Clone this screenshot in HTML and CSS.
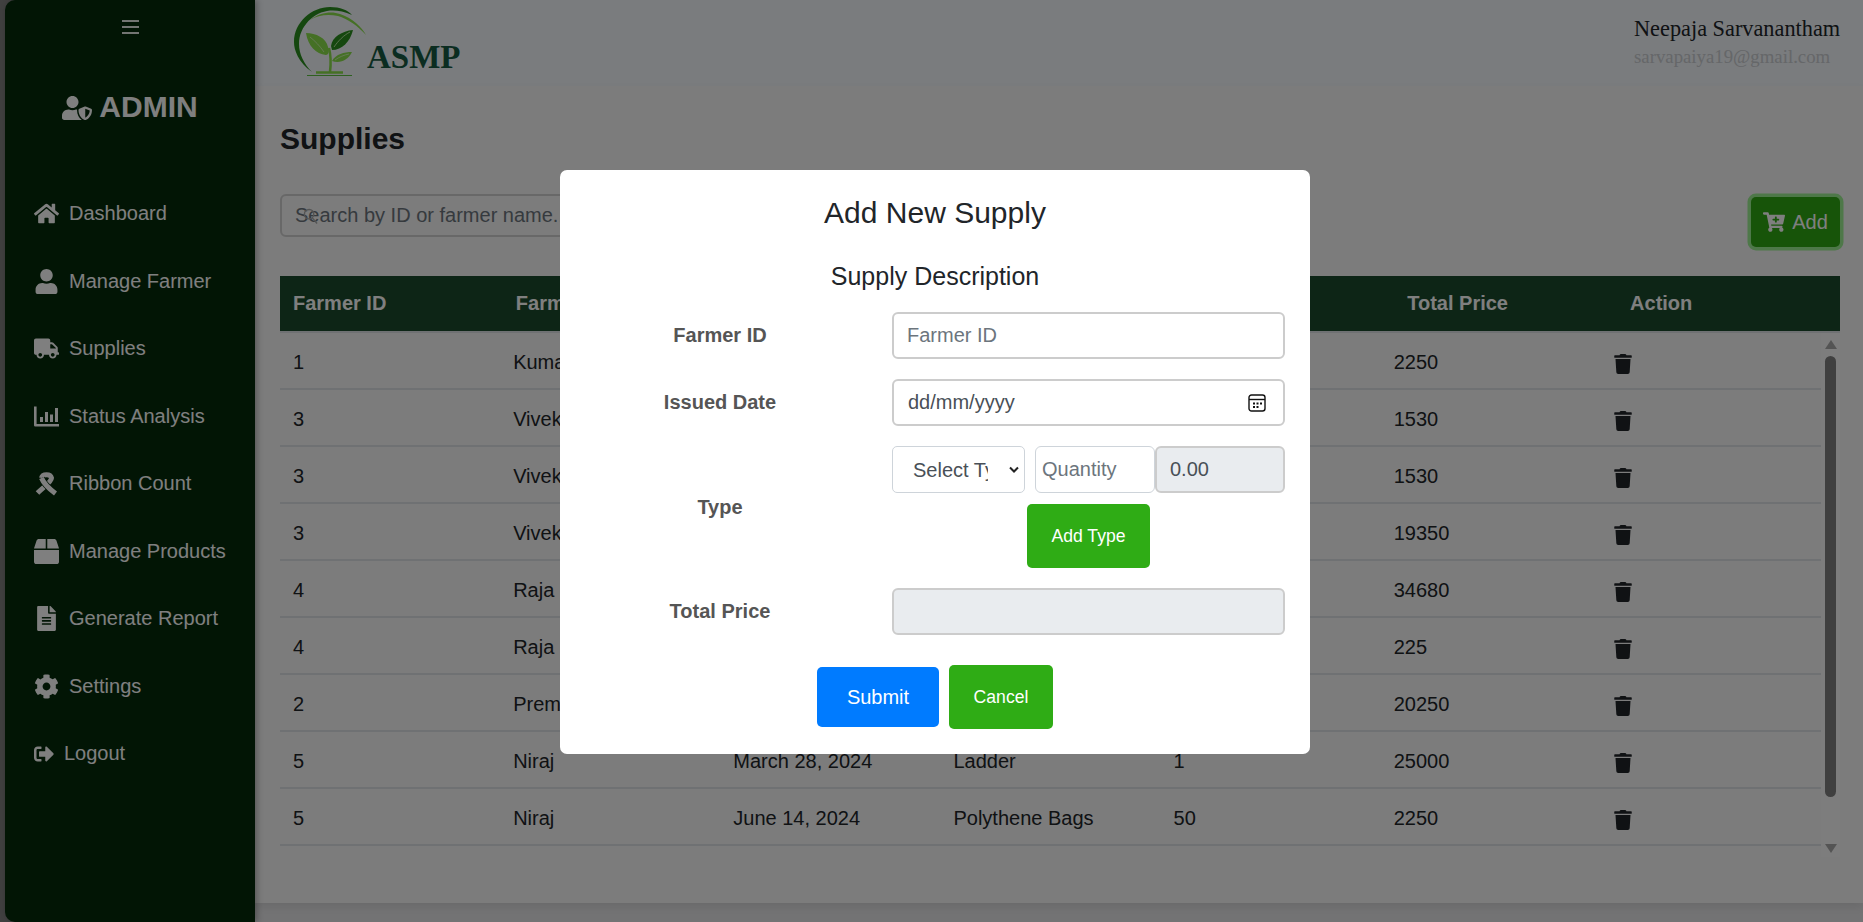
FILE: index.html

```html
<!DOCTYPE html>
<html lang="en">
<head>
  <meta charset="UTF-8" />
  <meta name="viewport" content="width=device-width, initial-scale=1.0"/>
  <title>Supplies</title>
  <link rel="stylesheet" href="styles.css">
</head>
<body>
  <svg class="defs" width="0" height="0">
    <symbol id="trash" viewBox="0 0 448 512"><path d="M432 32H312l-9.4-18.7A24 24 0 0 0 281.1 0H166.8a23.72 23.72 0 0 0-21.4 13.3L136 32H16A16 16 0 0 0 0 48v32a16 16 0 0 0 16 16h416a16 16 0 0 0 16-16V48a16 16 0 0 0-16-16zM53.2 467a48 48 0 0 0 47.9 45h245.8a48 48 0 0 0 47.9-45L416 128H32z"/></symbol>
  </svg>

  <div class="app">
    <aside class="sidebar">
      <div class="burger"><span></span><span></span><span></span></div>
      <div class="brand">
        <svg class="brand-icon" viewBox="0 0 640 512"><path d="M622.3 271.1l-115.2-45c-4.1-1.6-12.6-3.7-22.2 0l-115.2 45c-10.7 4.2-17.7 14-17.7 24.9 0 111.6 68.7 188.8 132.9 213.9 9.6 3.7 18 1.6 22.2 0C558.4 489.9 640 420.5 640 296c0-10.9-7-20.7-17.7-24.9zM496 462.4V273.3l95.5 37.3c-5.6 87.1-60.9 135.4-95.5 151.8zM224 256c70.7 0 128-57.3 128-128S294.7 0 224 0 96 57.3 96 128s57.3 128 128 128zm96 40c0-2.5.8-4.7 1.1-7.2-2.5-.1-4.9-.8-7.5-.8h-16.7c-22.2 10.2-46.9 16-72.9 16s-50.6-5.8-72.9-16h-16.7C60.2 288 0 348.2 0 422.4V464c0 26.5 21.5 48 48 48h352c6.8 0 13.3-1.5 19.2-4-54-42.9-99.2-116.7-99.2-212z"/></svg>
        <span>ADMIN</span>
      </div>
      <nav class="menu">
        <a class="menu-item"><svg class="menu-icon" viewBox="0 0 576 512"><path d="M280.37 148.26L96 300.11V464a16 16 0 0 0 16 16l112.06-.29a16 16 0 0 0 15.92-16V368a16 16 0 0 1 16-16h64a16 16 0 0 1 16 16v95.64a16 16 0 0 0 16 16.05L464 480a16 16 0 0 0 16-16V300L295.67 148.26a12.19 12.19 0 0 0-15.3 0zM571.6 251.47L488 182.56V44.05a12 12 0 0 0-12-12h-56a12 12 0 0 0-12 12v72.61L318.47 43a48 48 0 0 0-61 0L4.34 251.47a12 12 0 0 0-1.6 16.9l25.5 31A12 12 0 0 0 45.15 301l235.22-193.74a12.19 12.19 0 0 1 15.3 0L530.9 301a12 12 0 0 0 16.9-1.6l25.5-31a12 12 0 0 0-1.7-16.93z"/></svg>Dashboard</a>
        <a class="menu-item"><svg class="menu-icon" viewBox="0 0 448 512"><path d="M224 256c70.7 0 128-57.3 128-128S294.7 0 224 0 96 57.3 96 128s57.3 128 128 128zm89.6 32h-16.7c-22.2 10.2-46.9 16-72.9 16s-50.6-5.8-72.9-16h-16.7C60.2 288 0 348.2 0 422.4V464c0 26.5 21.5 48 48 48h352c26.5 0 48-21.5 48-48v-41.6c0-74.2-60.2-134.4-134.4-134.4z"/></svg>Manage Farmer</a>
        <a class="menu-item"><svg class="menu-icon" viewBox="0 0 640 512"><path d="M624 352h-16V243.9c0-12.7-5.1-24.9-14.1-33.9L494 110.1c-9-9-21.2-14.1-33.9-14.1H416V48c0-26.5-21.5-48-48-48H48C21.5 0 0 21.5 0 48v320c0 26.5 21.5 48 48 48h16c0 53 43 96 96 96s96-43 96-96h128c0 53 43 96 96 96s96-43 96-96h48c8.8 0 16-7.2 16-16v-32c0-8.8-7.2-16-16-16zM160 464c-26.5 0-48-21.5-48-48s21.5-48 48-48 48 21.5 48 48-21.5 48-48 48zm320 0c-26.5 0-48-21.5-48-48s21.5-48 48-48 48 21.5 48 48-21.5 48-48 48zm80-208H416V144h44.1l99.9 99.9V256z"/></svg>Supplies</a>
        <a class="menu-item"><svg class="menu-icon" viewBox="0 0 25 20"><path d="M0 0h2.6v17.4H25V20H1.3A1.3 1.3 0 0 1 0 18.7zM6 10.5h3v5H6zM11 5.5h3v10h-3zM16 8h3v7.500h-3zM21 1.500h3v14h-3z"/></svg>Status Analysis</a>
        <a class="menu-item"><svg class="menu-icon" viewBox="0 0 24 25"><path class="ribbon" d="M7 7C8 2.500 16 2.500 17 7 17 11 9 16 3 22"/><path class="ribbon-gap" d="M7 7C9 12 15 18 21 22.500"/><path class="ribbon" d="M7 7C9 12 15 18 21 22.500"/></svg>Ribbon Count</a>
        <a class="menu-item"><svg class="menu-icon" viewBox="0 0 512 512"><path d="M509.5 184.6L458.9 32.8C452.4 13.2 434.1 0 413.4 0H272v192h238.7c-.4-2.5-.4-5-1.2-7.4zM240 0H98.6c-20.7 0-39 13.2-45.5 32.8L2.5 184.6c-.8 2.4-.8 4.9-1.2 7.4H240V0zM0 224v240c0 26.5 21.5 48 48 48h416c26.5 0 48-21.5 48-48V224H0z"/></svg>Manage Products</a>
        <a class="menu-item"><svg class="menu-icon" viewBox="0 0 384 512"><path d="M224 136V0H24C10.7 0 0 10.7 0 24v464c0 13.3 10.7 24 24 24h336c13.300 0 24-10.700 24-24V160H248c-13.200 0-24-10.800-24-24zm64 236c0 6.600-5.400 12-12 12H108c-6.600 0-12-5.400-12-12v-8c0-6.600 5.400-12 12-12h168c6.600 0 12 5.400 12 12v8zm0-64c0 6.600-5.400 12-12 12H108c-6.600 0-12-5.400-12-12v-8c0-6.600 5.400-12 12-12h168c6.600 0 12 5.400 12 12v8zm0-72v8c0 6.600-5.400 12-12 12H108c-6.600 0-12-5.400-12-12v-8c0-6.600 5.400-12 12-12h168c6.600 0 12 5.400 12 12zm96-114.100v6.100H256V0h6.100c6.400 0 12.500 2.500 17 7l97.900 98c4.500 4.500 7 10.600 7 16.900z"/></svg>Generate Report</a>
        <a class="menu-item"><svg class="menu-icon" viewBox="0 0 512 512"><path d="M487.4 315.700l-42.600-24.600c4.300-23.200 4.300-47 0-70.200l42.600-24.600c4.900-2.800 7.100-8.600 5.500-14-11.100-35.600-30-67.800-54.700-94.600-3.800-4.100-10-5.100-14.800-2.300L380.800 110c-17.900-15.400-38.500-27.300-60.800-35.100V25.800c0-5.600-3.900-10.500-9.400-11.700-36.700-8.200-74.300-7.800-109.200 0-5.500 1.200-9.400 6.100-9.400 11.700V75c-22.200 7.900-42.800 19.800-60.800 35.100L88.700 85.500c-4.900-2.800-11-1.900-14.800 2.300-24.700 26.700-43.600 58.900-54.700 94.600-1.700 5.400.6 11.200 5.500 14L67.300 221c-4.300 23.200-4.300 47 0 70.200l-42.600 24.600c-4.900 2.800-7.100 8.600-5.500 14 11.100 35.600 30 67.800 54.700 94.600 3.800 4.100 10 5.100 14.800 2.300l42.600-24.600c17.900 15.400 38.500 27.300 60.800 35.100v49.200c0 5.600 3.900 10.500 9.400 11.700 36.700 8.200 74.300 7.800 109.200 0 5.500-1.200 9.400-6.100 9.400-11.700v-49.200c22.200-7.900 42.800-19.800 60.800-35.100l42.600 24.600c4.900 2.800 11 1.900 14.800-2.300 24.700-26.700 43.600-58.900 54.700-94.600 1.500-5.500-.7-11.300-5.600-14.100zM256 336c-44.100 0-80-35.900-80-80s35.900-80 80-80 80 35.900 80 80-35.900 80-80 80z"/></svg>Settings</a>
        <a class="menu-item"><svg class="menu-icon logout-icon" viewBox="0 0 512 512"><path d="M497 273L329 441c-15 15-41 4.500-41-17v-96H152c-13.300 0-24-10.700-24-24v-96c0-13.300 10.700-24 24-24h136V88c0-21.400 25.900-32 41-17l168 168c9.300 9.400 9.300 24.600 0 34zM192 436v-40c0-6.600-5.400-12-12-12H96c-17.700 0-32-14.300-32-32V160c0-17.700 14.300-32 32-32h84c6.600 0 12-5.400 12-12V76c0-6.600-5.400-12-12-12H96c-53 0-96 43-96 96v192c0 53 43 96 96 96h84c6.600 0 12-5.400 12-12z"/></svg>Logout</a>
      </nav>
    </aside>

    <div class="main">
      <header class="topbar">
        <div class="logo">
          <svg class="logo-mark" viewBox="0 0 100 86">
            <path class="leaf-dark" d="M42 72C28 62 24 50 24 42 24 22 42 7 60 7c10 0 18 3 22 8-8-4-16-5-22-4.500C44 12 29 26 29 44c0 10 5 20 13 28z"/>
            <path class="leaf-light" d="M40 20c10-8 22-9 30-6 12 4 22 13 26 21-8-9-18-16-28-19-10-2-20-1-28 4z"/>
            <path class="leaf-light" d="M36 33c10 0 20 5 22 14 2 5 0 8-2 8-10-1-18-9-20-22z"/>
            <path class="leaf-dark" d="M83 30c-11 1-21 7-22 16l1 4c10 0 18-8 21-20z"/>
            <path class="leaf-light" d="M82 52c-8 0-16 2-20 9 8 3 16-1 20-9z"/>
            <path class="logo-vein" d="M40 37c5 4 10 9 14 15M80 32c-6 3-12 9-16 15M79 54c-5 1-10 3-14 6"/>
            <path class="logo-stem" d="M59 48c2 8 2 16 1 24M46 72.500h27"/>
            <path class="logo-base" d="M37 75.500h45"/>
          </svg>
          <span class="logo-text">ASMP</span>
        </div>
        <div class="user">
          <div class="user-name">Neepaja Sarvanantham</div>
          <div class="user-mail">sarvapaiya19@gmail.com</div>
        </div>
      </header>

      <main class="panel">
        <h1 class="page-title">Supplies</h1>
        <div class="toolbar">
          <div class="search">
            <input class="search-input" type="text" placeholder="Search by ID or farmer name...">
            <svg class="search-icon" viewBox="0 0 16 18"><circle cx="6.500" cy="6.500" r="5"/><path d="M10 10.500l5 6"/></svg>
          </div>
          <button class="add-btn">
            <svg class="add-icon" viewBox="0 0 576 512"><path d="M504.717 320H211.572l6.545 32h268.418c15.401 0 26.816 14.301 23.403 29.319l-5.517 24.276C523.112 414.668 536 433.828 536 456c0 31.202-25.519 56.485-56.841 55.998-29.844-.463-54.388-24.849-55.204-54.686-.446-16.3 6.084-31.072 16.855-41.312H231.088c10.718 10.188 17.244 24.886 16.867 41.129-.701 30.252-25.788 55.036-56.043 54.864C160.9 511.814 136 486.729 136 456c0-21.605 12.235-40.232 30.184-49.526L96.37 64H24C10.745 64 0 53.255 0 40V24C0 10.745 10.745 0 24 0h102.529c11.4 0 21.228 8.021 23.513 19.19L159.208 64H551.99c15.401 0 26.816 14.301 23.403 29.319l-47.273 208C525.637 312.246 515.923 320 504.717 320zM408 168h-48v-40c0-8.837-7.163-16-16-16h-16c-8.837 0-16 7.163-16 16v40h-48c-8.837 0-16 7.163-16 16v16c0 8.837 7.163 16 16 16h48v40c0 8.837 7.163 16 16 16h16c8.837 0 16-7.163 16-16v-40h48c8.837 0 16-7.163 16-16v-16c0-8.837-7.163-16-16-16z"/></svg>
            Add
          </button>
        </div>

        <table class="head-table">
          <thead>
            <tr>
              <th>Farmer ID</th>
              <th>Farmer</th>
              <th></th>
              <th></th>
              <th></th>
              <th>Total Price</th>
              <th>Action</th>
            </tr>
          </thead>
        </table>

        <div class="table-scroll">
          <table class="body-table">
            <tbody>
              <tr><td>1</td><td>Kumar</td><td></td><td></td><td></td><td>2250</td><td><svg class="trash"><use href="#trash"/></svg></td></tr>
              <tr><td>3</td><td>Vivek</td><td></td><td></td><td></td><td>1530</td><td><svg class="trash"><use href="#trash"/></svg></td></tr>
              <tr><td>3</td><td>Vivek</td><td></td><td></td><td></td><td>1530</td><td><svg class="trash"><use href="#trash"/></svg></td></tr>
              <tr><td>3</td><td>Vivek</td><td></td><td></td><td></td><td>19350</td><td><svg class="trash"><use href="#trash"/></svg></td></tr>
              <tr><td>4</td><td>Raja</td><td></td><td></td><td></td><td>34680</td><td><svg class="trash"><use href="#trash"/></svg></td></tr>
              <tr><td>4</td><td>Raja</td><td></td><td></td><td></td><td>225</td><td><svg class="trash"><use href="#trash"/></svg></td></tr>
              <tr><td>2</td><td>Prem</td><td></td><td></td><td></td><td>20250</td><td><svg class="trash"><use href="#trash"/></svg></td></tr>
              <tr><td>5</td><td>Niraj</td><td>March 28, 2024</td><td>Ladder</td><td>1</td><td>25000</td><td><svg class="trash"><use href="#trash"/></svg></td></tr>
              <tr><td>5</td><td>Niraj</td><td>June 14, 2024</td><td>Polythene Bags</td><td>50</td><td>2250</td><td><svg class="trash"><use href="#trash"/></svg></td></tr>
            </tbody>
          </table>
          <div class="scrollbar">
            <span class="arrow-up"></span>
            <span class="thumb"></span>
            <span class="arrow-down"></span>
          </div>
        </div>
      </main>
    </div>
  </div>

  <div class="overlay">
    <form class="modal">
      <h2 class="modal-title">Add New Supply</h2>
      <h3 class="modal-sub">Supply Description</h3>

      <div class="form-row">
        <label class="form-label">Farmer ID</label>
        <input class="field" type="text" placeholder="Farmer ID">
      </div>

      <div class="form-row">
        <label class="form-label">Issued Date</label>
        <div class="date-wrap">
          <input class="field date-field" type="text" value="dd/mm/yyyy">
          <svg class="date-icon" viewBox="0 0 18 18"><rect x="1" y="1" width="16" height="16" rx="2.500"/><path d="M1 5.500h16"/><path class="date-dots" d="M5 8.500h2v2H5zM8.500 8.500h2v2h-2zM12 8.500h2v2h-2zM5 12h2v2H5zM8.500 12h2v2h-2z"/></svg>
        </div>
      </div>

      <div class="form-row">
        <label class="form-label">Type</label>
        <div class="type-group">
          <div class="type-inputs">
            <div class="select-wrap">
              <select class="type-select"><option>Select Type</option></select>
              <svg class="select-arrow" viewBox="0 0 10 6"><path d="M1 1l4 4 4-4"/></svg>
            </div>
            <input class="qty-input" type="text" placeholder="Quantity">
            <input class="field price-input" type="text" value="0.00" readonly>
          </div>
          <button type="button" class="green-btn add-type">Add Type</button>
        </div>
      </div>

      <div class="form-row">
        <label class="form-label">Total Price</label>
        <input class="field locked" type="text" readonly>
      </div>

      <div class="modal-actions">
        <button type="button" class="submit-btn">Submit</button>
        <button type="button" class="green-btn cancel-btn">Cancel</button>
      </div>
    </form>
  </div>
</body>
</html>
```

FILE: styles.css

```css
* {
  box-sizing: border-box;
}
body {
  margin: 0;
  height: 922px;
  overflow: hidden;
  font-family: "Liberation Sans", Arial, sans-serif;
  font-size: 20px;
  color: #212529;
  background: #e6e6e8;
}
.defs {
  display: block;
  height: 0;
}
.app {
  display: flex;
  height: 922px;
  background: #808080;
}

/* sidebar */
.sidebar {
  width: 250px;
  margin-left: 5px;
  flex-shrink: 0;
  background: #042a0a;
  color: #fff;
  border-radius: 10px 0 0 10px;
  box-shadow: 2px 0 6px rgba(0, 0, 0, 0.3);
  position: relative;
  z-index: 1;
}
.burger {
  width: 17px;
  margin: 20px auto 0;
  display: flex;
  flex-direction: column;
  gap: 4px;
}
.burger span {
  height: 2px;
  background: #fff;
  opacity: 0.9;
}
.brand {
  display: flex;
  align-items: center;
  justify-content: center;
  gap: 7px;
  margin-top: 55px;
  height: 36px;
  font-size: 30px;
  font-weight: bold;
}
.brand-icon {
  width: 30px;
  height: 24px;
  fill: #fff;
  margin-top: 2px;
}
.menu {
  margin-top: 55px;
  padding-left: 29px;
  display: grid;
  grid-auto-rows: 67.5px;
}
.menu-item {
  display: flex;
  align-items: center;
  gap: 10px;
  color: #fff;
}
.menu-icon {
  width: 25px;
  height: 25px;
  fill: #fff;
  flex-shrink: 0;
}
.logout-icon {
  width: 20px;
  height: 20px;
}
.ribbon {
  fill: none;
  stroke: #fff;
  stroke-width: 5;
}
.ribbon-gap {
  fill: none;
  stroke: #042a0a;
  stroke-width: 6.5;
}

/* top bar */
.main {
  flex: 1;
  min-width: 0;
  background: #e6e6e8;
}
.topbar {
  height: 86px;
  display: flex;
  justify-content: space-between;
  background: #f4f8fc;
  padding: 0 23px 0 15px;
}
.logo {
  display: flex;
  position: relative;
}
.logo-mark {
  width: 100px;
  height: 86px;
}
.leaf-dark {
  fill: #2a8f1e;
}
.leaf-light {
  fill: #8ae04a;
}
.logo-vein {
  fill: none;
  stroke: #d8f8c0;
  stroke-width: 0.8;
}
.logo-stem {
  fill: none;
  stroke: #8ae04a;
  stroke-width: 2.5;
}
.logo-base {
  fill: none;
  stroke: #5cc040;
  stroke-width: 1.2;
}
.logo-text {
  font-family: "Liberation Serif", serif;
  font-weight: bold;
  font-size: 33px;
  color: #165a42;
  margin: 38px 0 0 -3px;
  line-height: 38px;
}
.user {
  padding-top: 16px;
  width: 206px;
  font-family: "Liberation Serif", serif;
}
.user-name {
  font-size: 22.3px;
  line-height: 26px;
  white-space: nowrap;
}
.user-mail {
  font-size: 18.8px;
  line-height: 24px;
  margin-top: 3px;
  color: #cbced2;
  white-space: nowrap;
}

/* page */
.panel {
  height: 817px;
  background: #f8f8f8;
  padding: 35px 23px 0 25px;
  box-shadow: 0 4px 8px rgba(0, 0, 0, 0.08);
}
.page-title {
  margin: 0;
  font-size: 30px;
  line-height: 36px;
  font-weight: bold;
}
.toolbar {
  margin-top: 37px;
  margin-bottom: 29px;
  height: 53px;
  display: flex;
  justify-content: space-between;
  align-items: flex-start;
}
.search {
  position: relative;
  width: 500px;
}
.search-input {
  width: 100%;
  height: 43px;
  border: 2px solid #d0d0d0;
  border-radius: 6px;
  padding: 0 13px;
  font: inherit;
  background: #f8f8f8;
}
.search-input::placeholder,
.field::placeholder,
.qty-input::placeholder {
  color: #6c757d;
  opacity: 1;
}
.search-icon {
  position: absolute;
  left: 23px;
  top: 14px;
  width: 15px;
  height: 17px;
  fill: none;
  stroke: #a8a8a8;
  stroke-width: 1.5;
}
.add-btn {
  width: 89px;
  height: 50px;
  margin: 3px 0 0 0;
  display: flex;
  align-items: center;
  justify-content: center;
  gap: 7px;
  background: #2fa812;
  color: #fff;
  border: 0;
  border-radius: 5px;
  font: inherit;
  box-shadow: 0 0 0 3.5px #9cf092;
}
.add-icon {
  width: 22px;
  height: 20px;
  fill: #fff;
}

/* table */
.head-table,
.body-table {
  border-collapse: separate;
  border-spacing: 0;
  table-layout: fixed;
}
.head-table {
  width: 1560px;
}
.head-table th {
  height: 57px;
  padding: 0 0 0 13px;
  text-align: left;
  color: #fff;
  font-size: 20px;
  background: #1a4a2c;
  border-bottom: 2px solid #dee2e6;
  white-space: nowrap;
  overflow: hidden;
}
.table-scroll {
  display: flex;
  width: 1560px;
  height: 524px;
}
.body-table {
  width: 1541px;
  height: 513px;
  flex-shrink: 0;
}
.body-table td {
  height: 57px;
  padding: 3px 0 0 13px;
  border-bottom: 2px solid #dee2e6;
  white-space: nowrap;
}
.trash {
  display: block;
  width: 18px;
  height: 20px;
  margin-top: 3px;
  fill: #212529;
}
.scrollbar {
  width: 19px;
  display: flex;
  flex-direction: column;
  align-items: center;
  background: #fbfbfb;
}
.arrow-up {
  margin-top: 7px;
  border: 6.5px solid transparent;
  border-top: 0;
  border-bottom: 9px solid #a8a8a8;
}
.thumb {
  width: 11px;
  height: 441px;
  margin-top: 7px;
  border-radius: 6px;
  background: #808080;
}
.arrow-down {
  margin-top: auto;
  margin-bottom: 4px;
  border: 6.5px solid transparent;
  border-bottom: 0;
  border-top: 9px solid #a8a8a8;
}

/* modal */
.overlay {
  position: fixed;
  inset: 0;
  background: rgba(0, 0, 0, 0.5);
  z-index: 10;
  padding: 170px 0 0 560px;
}
.modal {
  width: 750px;
  height: 584px;
  background: #fff;
  border-radius: 7px;
  padding: 25px 25px 0;
}
.modal-title {
  margin: 0;
  text-align: center;
  font-size: 30px;
  line-height: 36px;
  font-weight: normal;
}
.modal-sub {
  margin: 30px 0 21px;
  text-align: center;
  font-size: 25px;
  line-height: 30px;
  font-weight: normal;
}
.form-row {
  display: grid;
  grid-template-columns: 270px 393px;
  column-gap: 37px;
  align-items: center;
  margin-bottom: 20px;
}
.form-label {
  text-align: center;
  font-weight: bold;
  color: #555;
}
.field {
  width: 100%;
  height: 47px;
  border: 2px solid #ccc;
  border-radius: 6px;
  padding: 0 13px;
  font: inherit;
  color: #495057;
  background: #fff;
}
.date-wrap {
  position: relative;
}
.date-field {
  padding-left: 14px;
}
.date-icon {
  position: absolute;
  left: 356px;
  top: 15px;
  width: 18px;
  height: 18px;
  fill: none;
  stroke: #111;
  stroke-width: 1.4;
}
.date-dots {
  fill: #111;
  stroke: none;
}
.type-group {
  display: flex;
  flex-direction: column;
  align-items: center;
}
.type-inputs {
  display: flex;
  width: 100%;
  height: 47px;
}
.select-wrap {
  position: relative;
  width: 133px;
  height: 47px;
}
.type-select {
  appearance: none;
  width: 133px;
  height: 47px;
  padding: 0 36px 0 20px;
  border: 1px solid #ced4da;
  border-radius: 5px;
  background: #fff;
  color: #495057;
  font: inherit;
}
.select-arrow {
  position: absolute;
  right: 6px;
  top: 20px;
  width: 10px;
  height: 7px;
  fill: none;
  stroke: #222;
  stroke-width: 2;
}
.qty-input {
  width: 120px;
  height: 47px;
  margin-left: 10px;
  padding: 0 6px;
  border: 1px solid #ced4da;
  border-radius: 6px;
  font: inherit;
  color: #495057;
}
.price-input {
  width: 130px;
  padding: 0 13px;
  background: #e9ecef;
}
.locked {
  background: #e9ecef;
}
.green-btn {
  background: #2fac15;
  color: #fff;
  border: 0;
  border-radius: 5px;
  font: inherit;
  font-size: 17.6px;
}
.add-type {
  width: 123px;
  height: 64px;
  margin-top: 11px;
}
.modal-actions {
  display: flex;
  justify-content: center;
  align-items: center;
  gap: 10px;
  margin-top: 30px;
}
.submit-btn {
  width: 122px;
  height: 60px;
  background: #007bff;
  color: #fff;
  border: 0;
  border-radius: 5px;
  font: inherit;
}
.cancel-btn {
  width: 104px;
  height: 64px;
}
```
